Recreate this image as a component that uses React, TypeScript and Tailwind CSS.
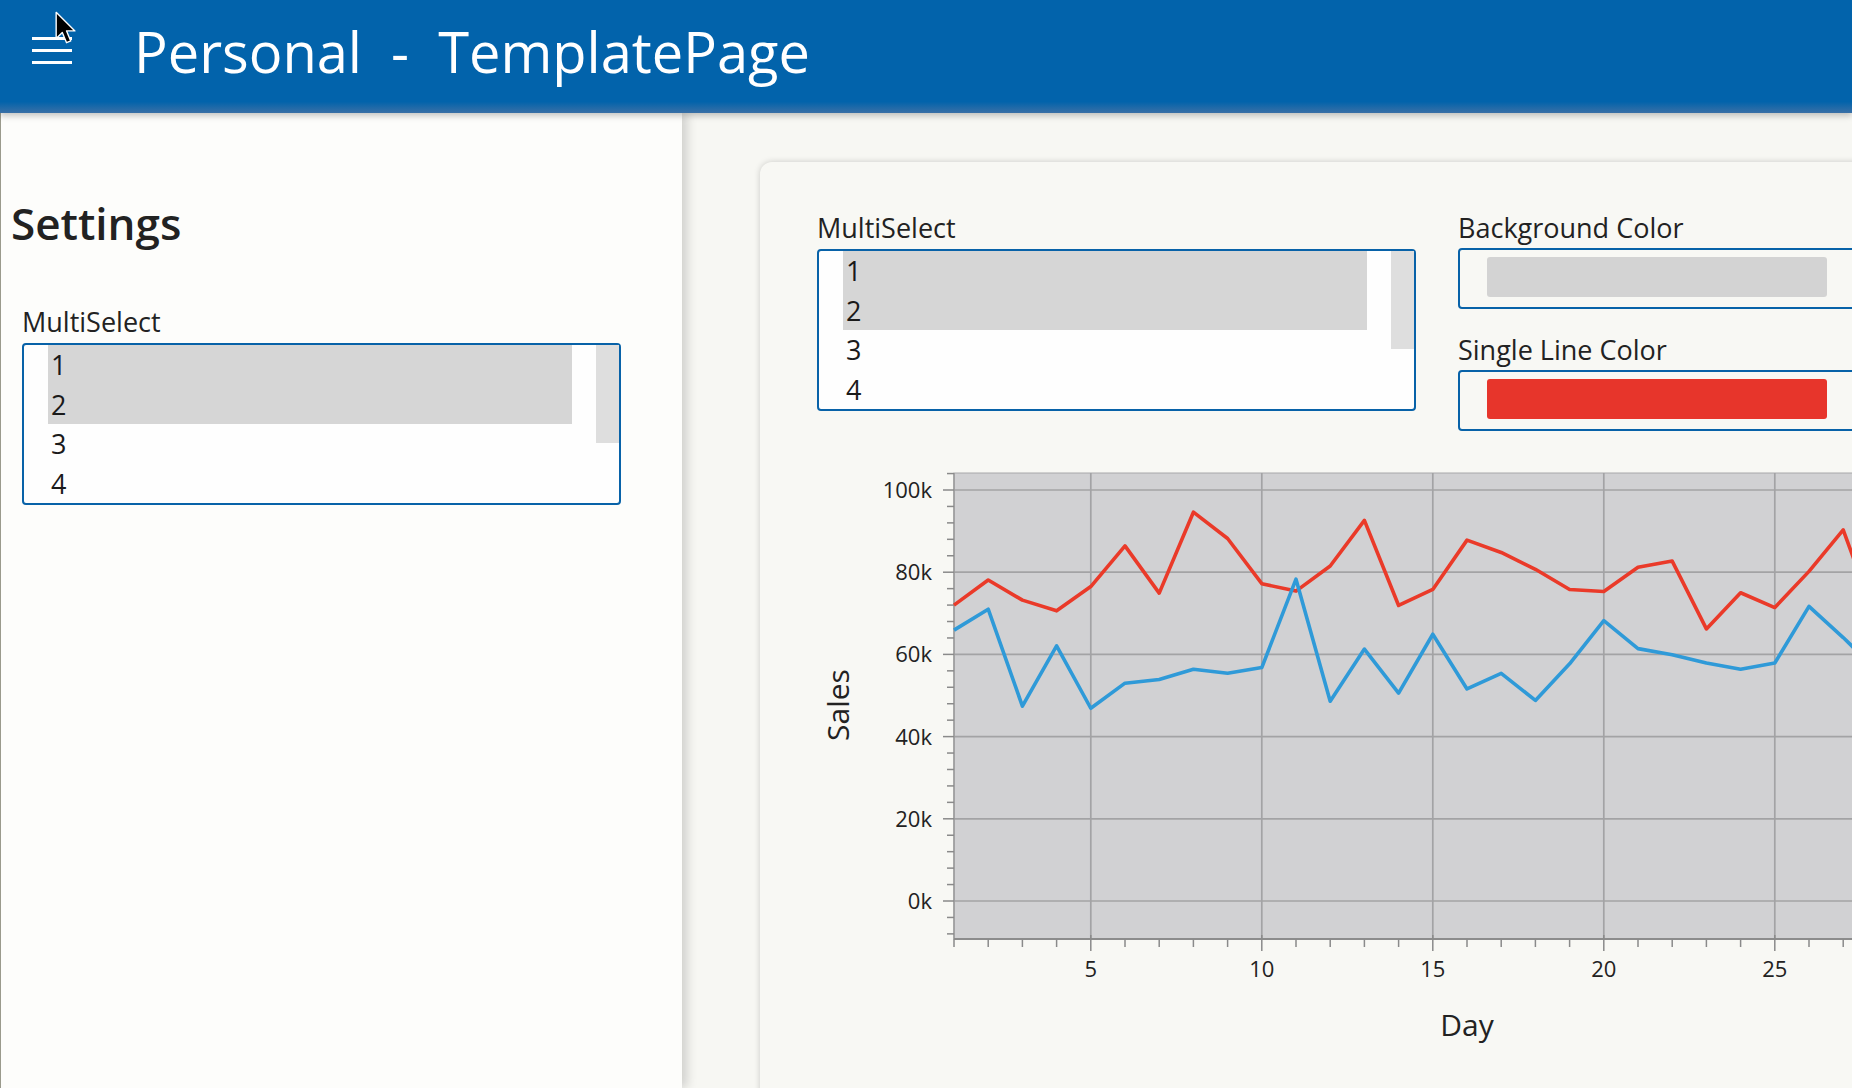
const RED = [72.0, 78.1, 73.2, 70.6, 76.5, 86.4, 74.9, 94.6, 88.2, 77.2, 75.4, 81.5, 92.6, 71.9, 75.8, 87.8, 84.8, 80.7, 75.8, 75.3, 81.2, 82.7, 66.2, 75.0, 71.4, 80.2, 90.3, 67.5, 74, 79, 72];
const BLUE = [65.9, 71.0, 47.4, 62.1, 46.9, 53.0, 53.9, 56.4, 55.4, 56.8, 78.3, 48.6, 61.3, 50.6, 64.9, 51.6, 55.4, 48.8, 57.7, 68.2, 61.4, 59.9, 57.9, 56.4, 57.9, 71.7, 64.1, 56, 60, 52, 58];

// chart geometry (svg coords)
const X0 = 137;
const DX = 34.2;
const Y0 = 470;
const KY = 4.11; // px per 1k
const TOP = 42;
const BOTTOM = 508;
const RIGHT = X0 + 30 * DX;

const px = (d: number) => X0 + (d - 1) * DX;
const py = (v: number) => Y0 - v * KY;

const days = Array.from({ length: 31 }, (_, i) => i + 1);
const yTicks = Array.from({ length: 29 }, (_, i) => -8 + i * 4);

function points(data: number[]) {
  return data.map((v, i) => `${px(i + 1)},${py(v)}`).join(' ');
}

function MultiSelect() {
  const items = ['1', '2', '3', '4'];
  return (
    <div className="w-[599px]">
      <div className="text-[27px] leading-[37px] text-[#222] mb-[3px]">MultiSelect</div>
      <div className="flex h-[162px] rounded-[4px] border-2 border-[#0862a8] bg-[#fefefe] pl-[24px]">
        <ul className="w-[524px]">
          {items.map((item, index) => (
            <li
              key={item}
              className={`h-[39.5px] pl-[3px] text-[27px] leading-[39.5px] text-[#1a1a1a] ${index < 2 ? 'bg-[#d6d6d6]' : ''}`}
            >
              {item}
            </li>
          ))}
        </ul>
        <div className="ml-[24px] w-[23px] h-[98px] bg-[#dedede]" />
      </div>
    </div>
  );
}

function ColorField({ label, color }: { label: string; color: string }) {
  return (
    <div>
      <div className="text-[27px] leading-[37px] text-[#222] mb-[2px]">{label}</div>
      <div className="h-[61px] rounded-[4px] border-2 border-[#0862a8] pt-[7px] pl-[27px] pr-[27px]">
        <div className={`h-[40px] rounded-[3px] ${color}`} />
      </div>
    </div>
  );
}

function SalesChart() {
  return (
    <svg width="1040" height="640" className="block" style={{ fontFamily: "'Open Sans', sans-serif" }}>
      <rect x={X0} y={TOP} width={RIGHT - X0 + 10} height={BOTTOM - TOP} fill="#d1d1d3" stroke="#a8a8aa" strokeWidth="1" />
      {[0, 20, 40, 60, 80, 100].map((v) => (
        <line key={v} x1={X0} x2={RIGHT + 10} y1={py(v)} y2={py(v)} stroke="#a3a3a5" strokeWidth="1.7" />
      ))}
      {[5, 10, 15, 20, 25, 30].map((d) => (
        <line key={d} x1={px(d)} x2={px(d)} y1={TOP} y2={BOTTOM} stroke="#a3a3a5" strokeWidth="1.7" />
      ))}
      <line x1={X0} x2={X0} y1={TOP} y2={BOTTOM} stroke="#9a9a9a" strokeWidth="1.5" />
      <line x1={X0} x2={RIGHT + 10} y1={BOTTOM} y2={BOTTOM} stroke="#8c8c8c" strokeWidth="2" />
      {yTicks.map((v) => (
        <line key={v} x1={v % 20 === 0 ? 126 : 130} x2={X0} y1={py(v)} y2={py(v)} stroke="#8a8a8a" strokeWidth="1.5" />
      ))}
      {days.map((d) => (
        <line
          key={d}
          x1={px(d)}
          x2={px(d)}
          y1={d % 5 === 0 ? 504 : BOTTOM}
          y2={d % 5 === 0 ? 520 : 516}
          stroke="#8a8a8a"
          strokeWidth="1.5"
        />
      ))}
      {[0, 20, 40, 60, 80, 100].map((v) => (
        <text key={v} x={115} y={py(v) + 8} textAnchor="end" fontSize="22" fill="#222">
          {v}k
        </text>
      ))}
      {[5, 10, 15, 20, 25].map((d) => (
        <text key={d} x={px(d)} y={546} textAnchor="middle" fontSize="22" fill="#222">
          {d}
        </text>
      ))}
      <polyline points={points(RED)} fill="none" stroke="#ea3a29" strokeWidth="3.6" strokeLinejoin="round" />
      <polyline points={points(BLUE)} fill="none" stroke="#2f9ad8" strokeWidth="3.6" strokeLinejoin="round" />
      <text x={650} y={605} textAnchor="middle" fontSize="30" fill="#222">
        Day
      </text>
      <text transform="translate(32,274) rotate(-90)" textAnchor="middle" fontSize="30" fill="#222">
        Sales
      </text>
    </svg>
  );
}

export default function App() {
  return (
    <div className="relative h-screen w-screen overflow-hidden flex flex-col bg-[#f7f7f3] font-['Open_Sans',sans-serif]">
      <header className="relative z-20 flex h-[113px] shrink-0 items-start bg-[linear-gradient(to_bottom,#0263ab_90%,#3a70a6_100%)] shadow-[0_3px_6px_rgba(0,0,0,0.22)]">
        <div className="ml-[32px] mt-[37px] flex flex-col gap-[9px]">
          <span className="block h-[3px] w-[40px] bg-white" />
          <span className="block h-[3px] w-[40px] bg-white" />
          <span className="block h-[3px] w-[40px] bg-white" />
        </div>
        <h1 className="ml-[62px] pt-[13px] text-[56px] leading-[76px] text-white whitespace-pre">Personal  -  TemplatePage</h1>
      </header>

      <div className="flex flex-1 min-h-0">
        <aside className="relative z-10 w-[682px] shrink-0 border-l border-[#9a9a8c] bg-[#fdfdfb] pl-[10px] pt-[80px] shadow-[5px_0_10px_rgba(0,0,0,0.16)]">
          <h2 className="text-[44px] font-semibold leading-[60px] text-[#222]">Settings</h2>
          <div className="mt-[50px] ml-[11px]">
            <MultiSelect />
          </div>
        </aside>

        <main className="flex-1 min-w-0 overflow-hidden pl-[78px] pt-[49px]">
          <div className="w-[1300px] h-[1000px] rounded-[12px] bg-[#f8f8f4] pl-[57px] pt-[47px] shadow-[0_0_6px_rgba(0,0,0,0.18)]">
            <div className="flex items-start">
              <MultiSelect />
              <div className="ml-[42px] w-[398px] shrink-0 flex flex-col gap-[22px]">
                <ColorField label="Background Color" color="bg-[#d3d3d3]" />
                <ColorField label="Single Line Color" color="bg-[#e7352b]" />
              </div>
            </div>
            <SalesChart />
          </div>
        </main>
      </div>

      <svg className="absolute left-[55px] top-[11px] z-30" width="22" height="34" viewBox="0 0 19 29">
        <path d="M1 1 L1 23.5 L6.3 18.4 L10 27.2 L13.6 25.7 L10 17 L17.2 17 Z" fill="#000" stroke="#fff" strokeWidth="1.2" strokeLinejoin="round" />
      </svg>
    </div>
  );
}
